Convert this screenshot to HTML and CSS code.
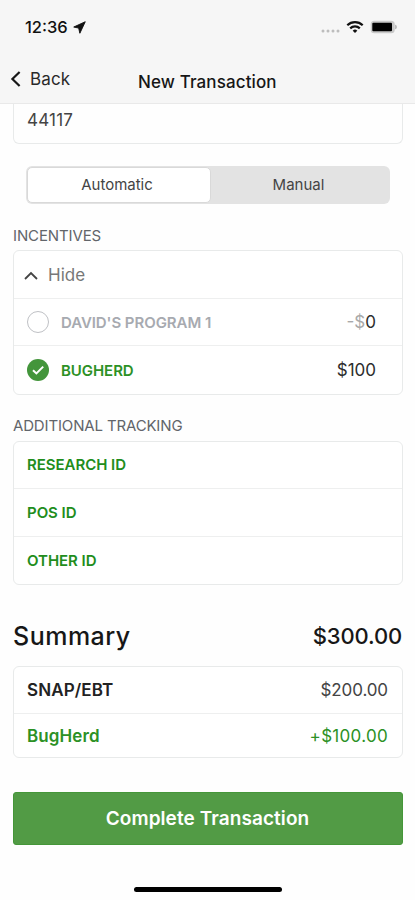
FILE: index.html
```html
<!DOCTYPE html>
<html lang="en">
<head>
<meta charset="utf-8">
<meta name="viewport" content="width=device-width, initial-scale=1">
<title>New Transaction</title>
<link rel="stylesheet" href="styles.css">
</head>
<body>
<header class="header">
  <div class="status">
    <span class="time">12:36</span>
    <svg class="location" width="13" height="13" viewBox="0 0 14 14"><path d="M13.2.8.8 6.5l5.3 1.1 1.3 5.6z" fill="#111" stroke="#111" stroke-width="1" stroke-linejoin="round"/></svg>
    <div class="status-icons">
      <svg width="20" height="6" viewBox="0 0 20 6" fill="#bdbdbd"><circle cx="2" cy="3" r="1.5"/><circle cx="7" cy="3" r="1.5"/><circle cx="12" cy="3" r="1.5"/><circle cx="17" cy="3" r="1.5"/></svg>
      <svg class="wifi" width="18" height="14" viewBox="0 0 18 14" fill="none" stroke="#111" stroke-width="2.2"><path d="M1.3 5.2a11 11 0 0 1 15.4 0M4.2 8.4a6.9 6.9 0 0 1 9.6 0"/><path d="M9 13 6.7 10.7a3.3 3.3 0 0 1 4.6 0z" fill="#111" stroke="none"/></svg>
      <svg class="battery" width="28" height="14" viewBox="0 0 28 14"><rect x=".7" y=".7" width="24" height="12.6" rx="3.6" fill="#c9c9c9"/><path d="M25.4 4.7c1.6.5 1.6 4.1 0 4.6z" fill="#999"/><rect x="2.3" y="2.8" width="19.7" height="8.4" rx="1" fill="#000"/></svg>
    </div>
  </div>
  <nav class="nav">
    <a class="back"><svg width="11" height="18" viewBox="0 0 11 18" fill="none" stroke="#171717" stroke-width="2.2"><path d="M9.6 2 2.4 9l7.2 7"/></svg><span>Back</span></a>
    <h1 class="title">New Transaction</h1>
  </nav>
</header>
<main class="content">
  <div class="field">44117</div>
  <div class="segmented"><div class="segment active">Automatic</div><div class="segment">Manual</div></div>

  <h2 class="label">INCENTIVES</h2>
  <section class="card incentives">
    <div class="row hide"><svg width="14" height="10" viewBox="0 0 14 10" fill="none" stroke="#444" stroke-width="1.8"><path d="m1 9 6-6 6 6"/></svg><span>Hide</span></div>
    <div class="row program"><span class="radio"></span><span class="name muted">DAVID'S PROGRAM 1</span><span class="amount"><span class="faint">-$</span>0</span></div>
    <div class="row program"><svg class="check" width="22" height="22" viewBox="0 0 22 22"><circle cx="11" cy="11" r="11" fill="#43953b"/><path d="m6 11.2 3.4 3.2 6.8-6.8" fill="none" stroke="#fff" stroke-width="2"/></svg><span class="name">BUGHERD</span><span class="amount">$100</span></div>
  </section>

  <h2 class="label tracking-label">ADDITIONAL TRACKING</h2>
  <section class="card tracking">
    <div class="row research">RESEARCH ID</div>
    <div class="row pos">POS ID</div>
    <div class="row other">OTHER ID</div>
  </section>

  <div class="summary-head"><h2 class="summary">Summary</h2><span class="total">$300.00</span></div>
  <section class="card totals">
    <div class="row snap"><span class="payer">SNAP/EBT</span><span class="value">$200.00</span></div>
    <div class="row bonus"><span class="payer">BugHerd</span><span class="value">+$100.00</span></div>
  </section>
  <button class="complete"><span>Complete Transaction</span></button>
  <div class="home"></div>
</main>
</body>
</html>
```
FILE: styles.css
```css
* { box-sizing: border-box; }
body { margin: 0; height: 900px; overflow: hidden; background: #fefefe; color: #222; font-family: Inter, "Liberation Sans", sans-serif; }
h1, h2 { margin: 0; font-weight: 400; }
svg { display: block; flex: none; }
span { white-space: nowrap; }
.header { height: 104px; background: #f6f6f6; border-bottom: 1px solid #e9e9e9; }
.status { display: flex; align-items: center; height: 54px; padding: 0 17px 0 25px; }
.time { font-size: 16.5px; font-weight: 500; color: #111; width: 43px; }
.location { margin-left: 5px; }
.status-icons { margin-left: auto; display: flex; align-items: center; }
.status-icons svg:first-child { margin-top: 8px; }
.wifi { margin: -1px 6px 0 5px; }
.nav { display: grid; grid-template-columns: 138px 140px 1fr; height: 49px; align-items: center; }
.back { display: flex; align-items: center; gap: 9px; padding-left: 10px; font-size: 17px; letter-spacing: .15px; color: #292929; }
.title { font-size: 17px; font-weight: 500; letter-spacing: .12px; color: #161616; padding-top: 6px; white-space: nowrap; }
.content { padding: 0 12px 0 13px; }
.field { height: 40px; border: 1px solid #e8eaea; border-top: 0; border-radius: 0 0 6px 6px; padding: 6px 13px; font-size: 17px; line-height: 20px; letter-spacing: .2px; color: #444; }
.segmented { display: flex; margin: 22px 13px 0; height: 38px; background: #e3e3e3; border-radius: 6px; padding: 1px; }
.segment { flex: 1; display: flex; align-items: center; justify-content: center; padding: 0 3px 1px 0; font-size: 15px; color: #444; }
.segment.active { flex: 0 0 184px; padding-right: 4px; background: #fff; border: 1px solid #d9d9d9; border-radius: 5px; }
.label { height: 46px; padding-top: 23px; font-size: 15px; line-height: 18px; letter-spacing: -.12px; color: #62656a; }
.card { border: 1px solid #e8eaea; border-radius: 6px; background: #fff; }
.row { display: flex; align-items: center; border-bottom: 1px solid #eeefef; }
.row:last-child { border-bottom: 0; }
.incentives { height: 144.5px; }
.incentives .row { height: 47.5px; }
.hide { padding: 2px 0 0 10px; gap: 10px; font-size: 17px; color: #777; }
.program { padding: 1px 26px 0 13px; }
.radio { width: 22px; height: 22px; border: 1px solid #bfc1c5; border-radius: 50%; }
.name { margin-left: 12px; font-size: 15px; font-weight: 600; letter-spacing: -.06px; color: #2c9125; }
.name.muted { color: #a7aab0; }
.amount { margin-left: auto; font-size: 17px; color: #2d2d2d; }
.faint { color: #a9a9a9; }
.tracking-label { padding-top: 22px; letter-spacing: -.15px; }
.tracking { height: 144px; }
.tracking .row { height: 47.5px; padding-left: 13px; font-size: 15px; font-weight: 600; letter-spacing: -.04px; color: #218d1c; }
.summary-head { display: flex; justify-content: space-between; align-items: center; height: 81px; padding: 22px 1px 0 0; color: #171717; }
.summary { font-size: 25px; font-weight: 500; letter-spacing: .5px; }
.total { font-size: 22px; font-weight: 500; letter-spacing: -.15px; }
.totals { height: 92px; }
.totals .row { height: 47.5px; padding: 0 14px 0 13px; }
.totals .row:last-child { height: 43px; color: #2c9125; }
.payer { font-size: 17px; font-weight: 600; letter-spacing: .1px; }
.value { margin-left: auto; font-size: 17px; letter-spacing: -.1px; }
.snap .value { color: #444; }
.bonus .value { letter-spacing: .3px; }
.complete { display: flex; align-items: center; justify-content: center; width: 100%; height: 53px; margin: 34.5px 0 0; padding: 0 1px 0 0; border: 1px solid #459639; border-radius: 3px; background: #529b45; color: #fff; font: 600 19px Inter, sans-serif; letter-spacing: .08px; }
.home { width: 148px; height: 5px; margin: 42px auto 0; border-radius: 3px; background: #000; }
```
